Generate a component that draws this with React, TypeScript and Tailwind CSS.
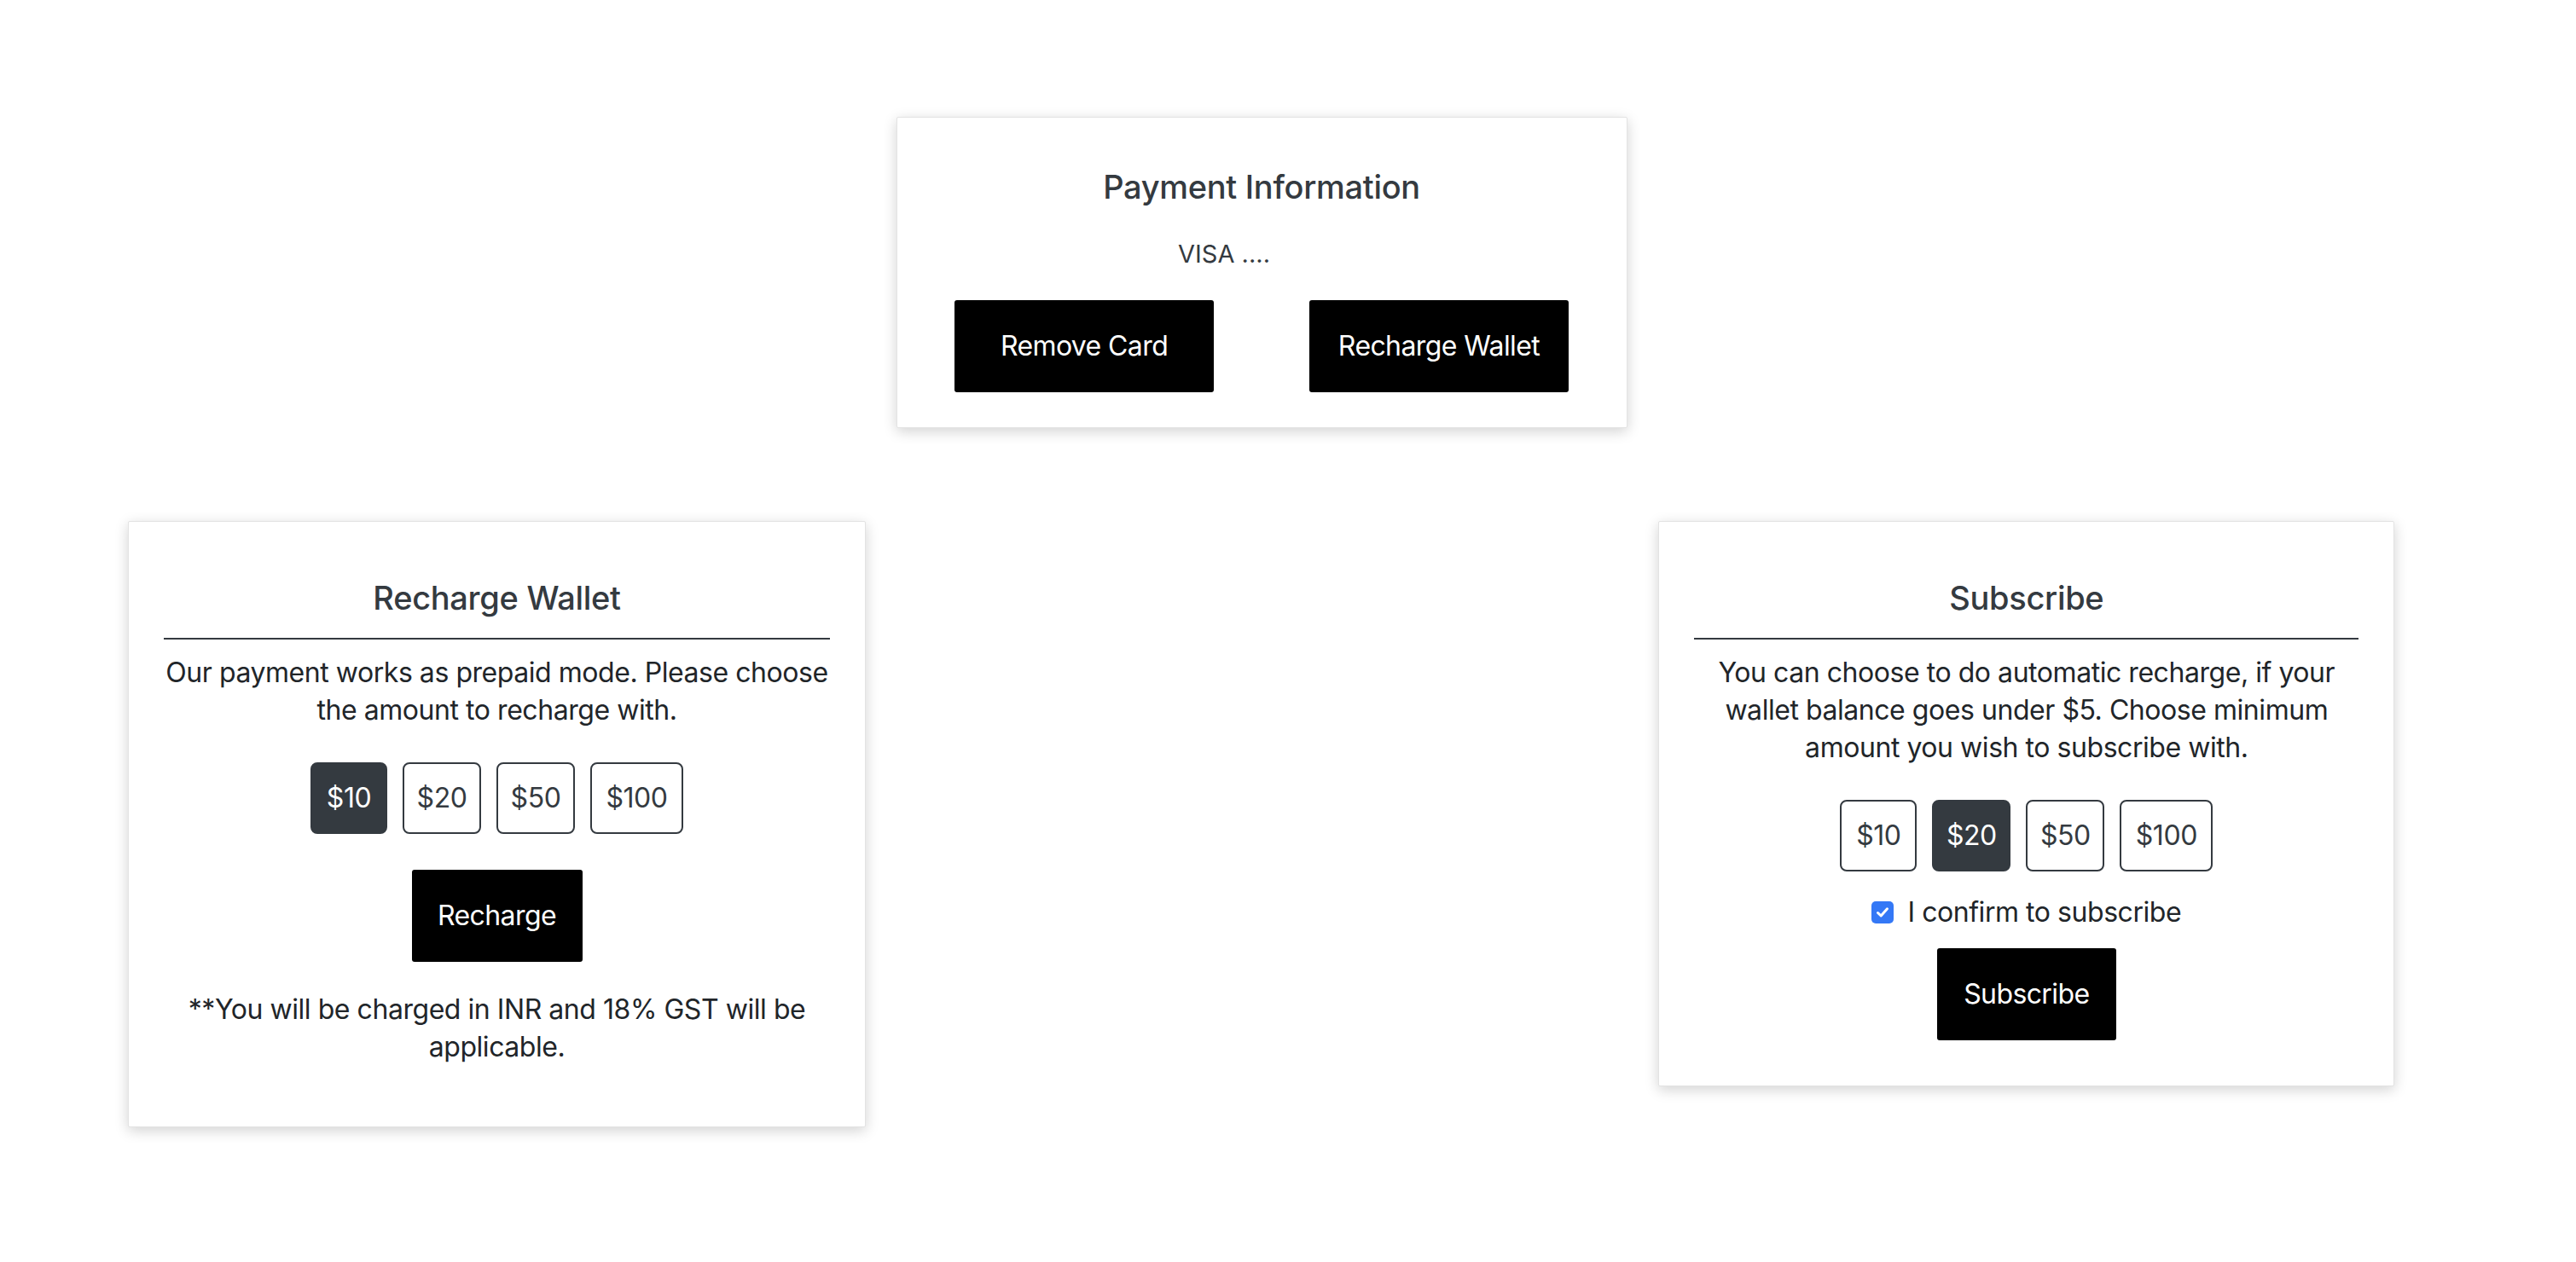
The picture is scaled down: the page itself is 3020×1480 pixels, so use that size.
import React from "react";

const amounts = [
  { label: "$10", w: "w-[90px]" },
  { label: "$20", w: "w-[92px]" },
  { label: "$50", w: "w-[92px]" },
  { label: "$100", w: "w-[109px]" },
];

function AmountRow({ selected }: { selected: number }) {
  return (
    <div className="flex justify-center gap-[18px]">
      {amounts.map((a, i) => (
        <button
          key={a.label}
          className={
            "h-[84px] " +
            a.w +
            " rounded-[8px] border-2 border-[#343a40] text-[32px] leading-[44px] tracking-[-0.45px] flex items-center justify-center " +
            (i === selected ? "bg-[#343a40] text-white" : "bg-white text-[#343a40]")
          }
        >
          {a.label}
        </button>
      ))}
    </div>
  );
}

function BlackButton({ children, w }: { children: React.ReactNode; w: string }) {
  return (
    <button
      className={
        "h-[108px] " +
        w +
        " bg-black text-white text-[32px] leading-[44px] tracking-[-0.6px] rounded-[3px] flex items-center justify-center"
      }
    >
      {children}
    </button>
  );
}

function Card({ children, w, extra }: { children: React.ReactNode; w: string; extra: string }) {
  return (
    <div
      className={
        w +
        " bg-white border border-[#e3e3e3] rounded-[2px] shadow-[0_4px_16px_rgba(0,0,0,0.18)] " +
        extra
      }
    >
      {children}
    </div>
  );
}

function CardTitle({ children }: { children: React.ReactNode }) {
  return (
    <div className="text-center text-[38px] leading-[46px] font-medium tracking-[-0.3px] text-[#343a40]">
      {children}
    </div>
  );
}

export default function App() {
  return (
    <div
      className="min-h-screen w-full bg-white text-[#212529]"
      style={{ fontFamily: "Inter, 'Noto Sans', 'Liberation Sans', sans-serif" }}
    >
      <div className="pt-[137px] pl-[134px]">
        <div className="w-[2690px]">
          <div className="flex justify-center">
            <Card w="w-[857px]" extra="pt-[58px] pb-[41px]">
              <CardTitle>Payment Information</CardTitle>
              <div className="mt-[36px] flex justify-center pr-[88px] text-[29px] leading-[40px] text-[#343a40]">
                VISA ....
              </div>
              <div className="mt-[34px] flex justify-center gap-[112px]">
                <BlackButton w="w-[304px]">Remove Card</BlackButton>
                <BlackButton w="w-[304px]">Recharge Wallet</BlackButton>
              </div>
            </Card>
          </div>

          <div className="mt-[109px] grid grid-cols-3 items-start">
            <div className="pl-[16px]">
              <Card w="w-[865px]" extra="pt-[66px] pb-[71px] px-[41px]">
                <CardTitle>Recharge Wallet</CardTitle>
                <div className="mt-[24px] h-[2px] bg-[#343a40]" />
                <p className="mt-[17px] text-center text-[32px] leading-[44px] tracking-[-0.45px]">
                  Our payment works as prepaid mode. Please choose the amount to recharge with.
                </p>
                <div className="mt-[39px]">
                  <AmountRow selected={0} />
                </div>
                <div className="mt-[42px] flex justify-center">
                  <BlackButton w="w-[200px]">Recharge</BlackButton>
                </div>
                <p className="mt-[34px] text-center text-[32px] leading-[44px] tracking-[-0.45px]">
                  **You will be charged in INR and 18% GST will be applicable.
                </p>
              </Card>
            </div>
            <div />
            <div className="pl-[17px]">
              <Card w="w-[863px]" extra="pt-[66px] pb-[53px] px-[41px]">
                <CardTitle>Subscribe</CardTitle>
                <div className="mt-[24px] h-[2px] bg-[#343a40]" />
                <p className="mt-[17px] text-center text-[32px] leading-[44px] tracking-[-0.45px]">
                  You can choose to do automatic recharge, if your wallet balance goes under $5. Choose
                  minimum amount you wish to subscribe with.
                </p>
                <div className="mt-[39px]">
                  <AmountRow selected={1} />
                </div>
                <div className="mt-[26px] flex items-center justify-center gap-[16px]">
                  <div className="w-[26px] h-[26px] rounded-[5px] bg-[#3478f6] flex items-center justify-center">
                    <svg width="18" height="18" viewBox="0 0 18 18" fill="none">
                      <path
                        d="M3.5 9.5 L7.2 13 L14.5 4.8"
                        stroke="white"
                        strokeWidth="3"
                        strokeLinecap="round"
                        strokeLinejoin="round"
                      />
                    </svg>
                  </div>
                  <span className="text-[32px] leading-[44px] tracking-[-0.45px]">I confirm to subscribe</span>
                </div>
                <div className="mt-[20px] flex justify-center">
                  <BlackButton w="w-[210px]">Subscribe</BlackButton>
                </div>
              </Card>
            </div>
          </div>
        </div>
      </div>
    </div>
  );
}
